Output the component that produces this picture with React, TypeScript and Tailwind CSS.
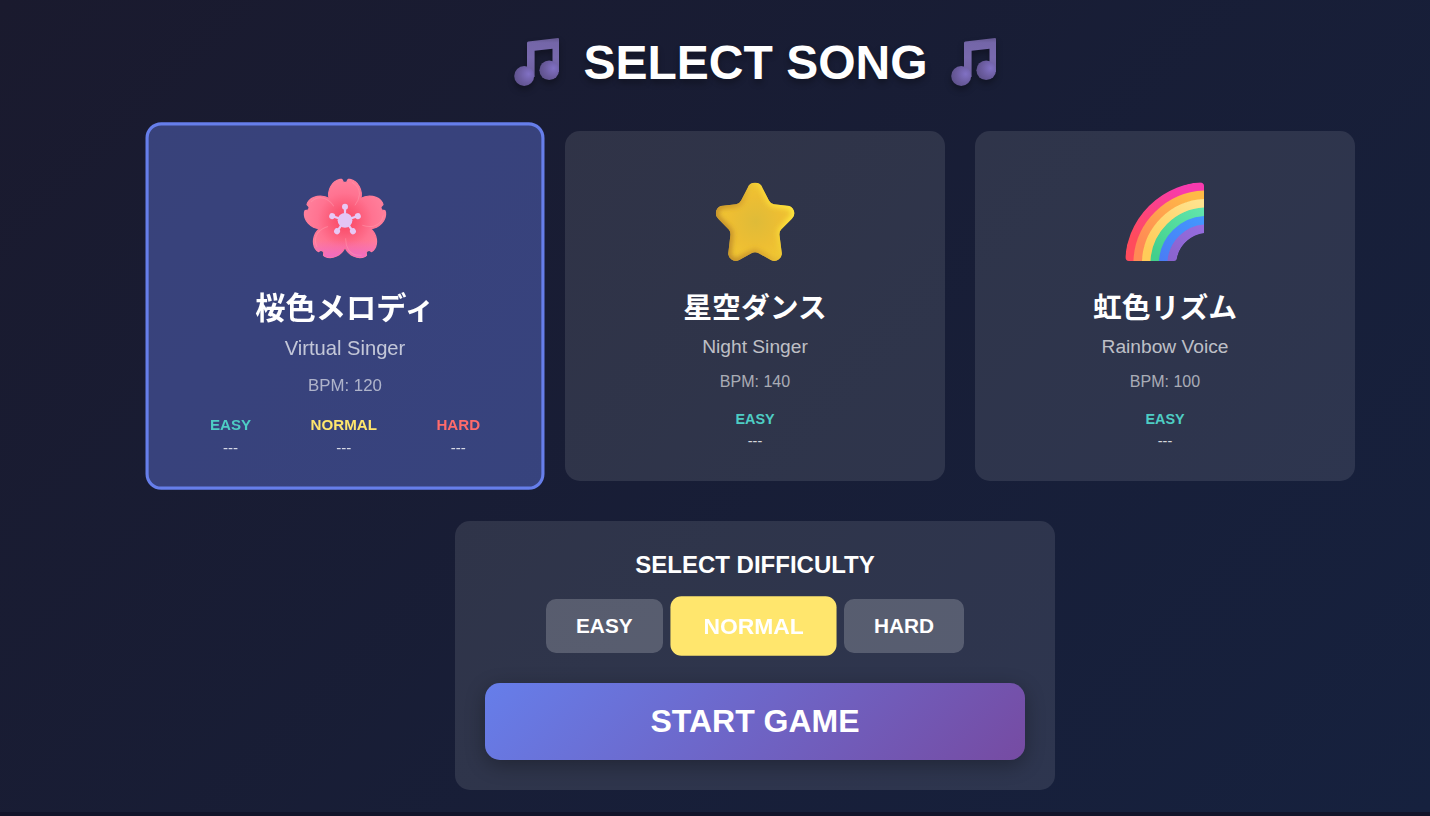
import React from 'react';

const NoteIcon = ({ id }: { id: string }) => (
  <svg width="54" height="56" viewBox="0 0 54 56" className="shrink-0 overflow-visible drop-shadow-[0_4px_3px_rgba(0,0,0,0.3)]" aria-hidden="true">
    <defs>
      <radialGradient id={id} cx="0.72" cy="0.4" r="0.75">
        <stop offset="0" stopColor="#8171c4" />
        <stop offset="0.6" stopColor="#6b5c9f" />
        <stop offset="1" stopColor="#5d518a" />
      </radialGradient>
      <linearGradient id={`${id}-beam`} x1="0" y1="0" x2="0" y2="1">
        <stop offset="0" stopColor="#63578f" />
        <stop offset="0.12" stopColor="#7466a8" />
        <stop offset="0.5" stopColor="#7869ad" />
        <stop offset="1" stopColor="#6d5f9f" />
      </linearGradient>
    </defs>
    <path d="M17 8Q17 6.700 18.300 6.500L48 3Q49 3 49 4V37H42.500V13.800L24.600 15.800V42H17Z" fill={`url(#${id}-beam)`} />
    <circle cx="14.2" cy="41" r="10" fill={`url(#${id})`} />
    <circle cx="39.2" cy="35.200" r="9.8" fill={`url(#${id})`} />
  </svg>
);

const PETAL = 'M0 0L-15.800 -21.500C-18 -30 -13 -39.500 -5 -41L-3.200 -41L-1.800 -38.400Q0 -37.400 1.800 -38.400L3.200 -41L5 -41C13 -39.500 18 -30 15.800 -21.500Z';
const TURNS = [0, 72, 144, 216, 288];

const BlossomIcon = () => (
  <svg width="80" height="80" viewBox="-42 -42 84 84" className="overflow-visible" aria-hidden="true">
    <defs>
      <radialGradient id="petals" gradientUnits="userSpaceOnUse" cx="0" cy="0" r="42">
        <stop offset="0" stopColor="#ff4260" />
        <stop offset="0.3" stopColor="#fb5875" />
        <stop offset="0.65" stopColor="#ff7391" />
        <stop offset="1" stopColor="#ff809c" />
      </radialGradient>
      <linearGradient id="petalTint" gradientUnits="userSpaceOnUse" x1="0" y1="20" x2="0" y2="40">
        <stop offset="0" stopColor="#ef67c8" stopOpacity="0" />
        <stop offset="1" stopColor="#ef67c8" />
      </linearGradient>
      <clipPath id="lowerPetals">
        <path d={PETAL} transform="rotate(144)" />
        <path d={PETAL} transform="rotate(216)" />
      </clipPath>
    </defs>
    <g transform="translate(0 2.5)">
      {TURNS.map((t) => (
        <path key={t} d={PETAL} transform={`rotate(${t})`} fill="url(#petals)" stroke="url(#petals)" strokeWidth="1.2" strokeLinejoin="round" />
      ))}
      <rect x="-42" y="14" width="84" height="28" fill="url(#petalTint)" clipPath="url(#lowerPetals)" />
      {TURNS.map((t) => (
        <path key={t} d="M7 -38Q14.500 -34 14.500 -26Q14 -20 10 -15" transform={`rotate(${t})`} fill="none" stroke="#ff9aad" strokeWidth="1" opacity="0.5" />
      ))}
      {TURNS.map((t) => (
        <g key={t} transform={`rotate(${t})`} fill="#e8c8f5">
          <rect x="-1.1" y="-13" width="2.2" height="10" />
          <circle cx="0" cy="-13.5" r="3" />
        </g>
      ))}
      <circle r="7.4" fill="#e3c5f6" />
    </g>
  </svg>
);

const STAR =
  'M32.500 5.500A8.200 8.200 0 0 1 48 5.500L54.500 18Q56 21 59.500 21.800L73 23.300A7.600 7.600 0 0 1 78 36.500L67 47.500Q65 49.500 65.300 53L67.500 70A7.600 7.600 0 0 1 56.500 78.300L43.500 71.300Q40.200 69.600 37 71.300L24 78.300A7.600 7.600 0 0 1 13 70L15 53Q15.300 49.500 13.300 47.500L2.500 36.500A7.600 7.600 0 0 1 7.500 23.300L21 21.800Q24.500 21 26 18Z';

const StarIcon = () => (
  <svg width="80" height="80" viewBox="0 0 80 80" aria-hidden="true">
    <defs>
      <radialGradient id="star" cx="0.5" cy="0.48" r="0.56">
        <stop offset="0" stopColor="#dfbb38" />
        <stop offset="0.55" stopColor="#edbe33" />
        <stop offset="1" stopColor="#f2c832" />
      </radialGradient>
      <linearGradient id="starEdge" x1="0" y1="0.7" x2="1" y2="0.3">
        <stop offset="0" stopColor="#b88328" />
        <stop offset="0.45" stopColor="#d8a52e" />
        <stop offset="0.75" stopColor="#fbdc38" />
        <stop offset="1" stopColor="#ffec42" />
      </linearGradient>
      <clipPath id="starShape">
        <path d={STAR} />
      </clipPath>
      <filter id="soft" x="-20%" y="-20%" width="140%" height="140%">
        <feGaussianBlur stdDeviation="2.6" />
      </filter>
    </defs>
    <g transform="translate(0.8 0.8) scale(0.975 0.985)">
      <g clipPath="url(#starShape)">
        <rect width="82" height="82" fill="url(#star)" />
        <path d={STAR} fill="none" stroke="url(#starEdge)" strokeWidth="6" filter="url(#soft)" />
      </g>
    </g>
  </svg>
);

const BANDS = [
  { r: 77.5, from: '#ff4b5c', to: '#f83aae' },
  { r: 69, from: '#ff8a55', to: '#ffba46' },
  { r: 60.5, from: '#ffcc59', to: '#ffe38e' },
  { r: 52, from: '#42cf8c', to: '#63e6ae' },
  { r: 43.5, from: '#4a7df5', to: '#429cff' },
  { r: 35, from: '#8862cc', to: '#9a70e4' },
];

const RainbowIcon = () => (
  <svg width="80" height="80" viewBox="0 0 80 80" aria-hidden="true">
    <defs>
      {BANDS.map((b, i) => (
        <linearGradient key={i} id={`band${i}`} gradientUnits="userSpaceOnUse" x1="5" y1="75" x2="60" y2="8">
          <stop offset="0.2" stopColor={b.from} />
          <stop offset="1" stopColor={b.to} />
        </linearGradient>
      ))}
      <clipPath id="arch">
        <path d="M4 79Q0.500 79 0.500 75C2 34 34 2 75 0.500Q79 0.500 79 4V51C66 52.500 54.500 63 52 76Q51.500 79 49 79Z" />
      </clipPath>
    </defs>
    <g clipPath="url(#arch)" fill="none">
      {BANDS.map((b, i) => (
        <circle key={i} cx="82" cy="82" r={b.r} stroke={`url(#band${i})`} strokeWidth="9.2" />
      ))}
    </g>
  </svg>
);

type Level = 'EASY' | 'NORMAL' | 'HARD';

const LEVEL_COLOR: Record<Level, string> = {
  EASY: 'text-[#4ecdc4]',
  NORMAL: 'text-[#ffe66d]',
  HARD: 'text-[#ff6b6b]',
};

const SONGS: { title: string; artist: string; bpm: number; icon: React.ReactNode; levels: Level[]; selected?: boolean }[] = [
  { title: '桜色メロディ', artist: 'Virtual Singer', bpm: 120, icon: <BlossomIcon />, levels: ['EASY', 'NORMAL', 'HARD'], selected: true },
  { title: '星空ダンス', artist: 'Night Singer', bpm: 140, icon: <StarIcon />, levels: ['EASY'] },
  { title: '虹色リズム', artist: 'Rainbow Voice', bpm: 100, icon: <RainbowIcon />, levels: ['EASY'] },
];

export default function App() {
  return (
    <div className="h-[816px] w-full overflow-hidden bg-[#12142a] font-['Liberation_Sans','Noto_Sans_CJK_JP',sans-serif] text-white">
      <main className="flex h-[812px] flex-col items-center bg-linear-[135deg] from-[#1a1a2e] to-[#16213e] pl-20">
        <h1 className="flex h-[131px] items-start justify-center gap-[19px] pt-[35px] pl-px text-[48px] leading-[55px] font-bold [text-shadow:0_4px_6px_rgba(0,0,0,0.3)]">
          <NoteIcon id="noteA" />
          <span>SELECT SONG</span>
          <NoteIcon id="noteB" />
        </h1>

        <section className="grid w-[1200px] shrink-0 grid-cols-3 gap-[30px]">
          {SONGS.map((s) => (
            <article
              key={s.title}
              className={`flex h-[350px] flex-col items-center rounded-[15px] border-[3px] px-[30px] pt-[48px] ${
                s.selected ? 'scale-105 border-[#667eea] bg-[#667eea]/40' : 'border-transparent bg-white/10'
              }`}
            >
              {s.icon}
              <h2 className="mt-[25px] text-[28.8px] leading-[42px] font-bold">{s.title}</h2>
              <p className="mt-[7px] text-[19.2px] leading-[22px] text-white/70">{s.artist}</p>
              <p className="mt-[15px] text-base leading-[18px] text-white/60">BPM: {s.bpm}</p>
              <div className="mt-[20px] flex w-full justify-around">
                {s.levels.map((l) => (
                  <div key={l} className="text-center">
                    <div className={`text-[14.4px] leading-4 font-bold ${LEVEL_COLOR[l]}`}>{l}</div>
                    <div className="mt-1.5 text-[14.4px] leading-4 text-white/80">---</div>
                  </div>
                ))}
              </div>
            </article>
          ))}
        </section>

        <section className="mt-10 flex h-[269px] w-[600px] shrink-0 flex-col items-center rounded-[15px] bg-white/10 px-[30px] pt-[30px]">
          <h3 className="text-2xl leading-[27px] font-bold">SELECT DIFFICULTY</h3>
          <div className="mt-[21px] flex gap-[15px] text-[20.8px] leading-6 font-bold">
            <button className="rounded-[10px] bg-white/20 px-[30px] py-[15px]">EASY</button>
            <button className="scale-110 rounded-[10px] bg-[#ffe66d] px-[30px] py-[15px]">NORMAL</button>
            <button className="rounded-[10px] bg-white/20 px-[30px] py-[15px]">HARD</button>
          </div>
          <button className="mt-[30px] w-full rounded-[15px] bg-linear-[135deg] from-[#667eea] to-[#764ba2] py-5 text-[32px] leading-[37px] font-bold shadow-[0_5px_20px_rgba(0,0,0,0.3)]">
            START GAME
          </button>
        </section>
      </main>
    </div>
  );
}
